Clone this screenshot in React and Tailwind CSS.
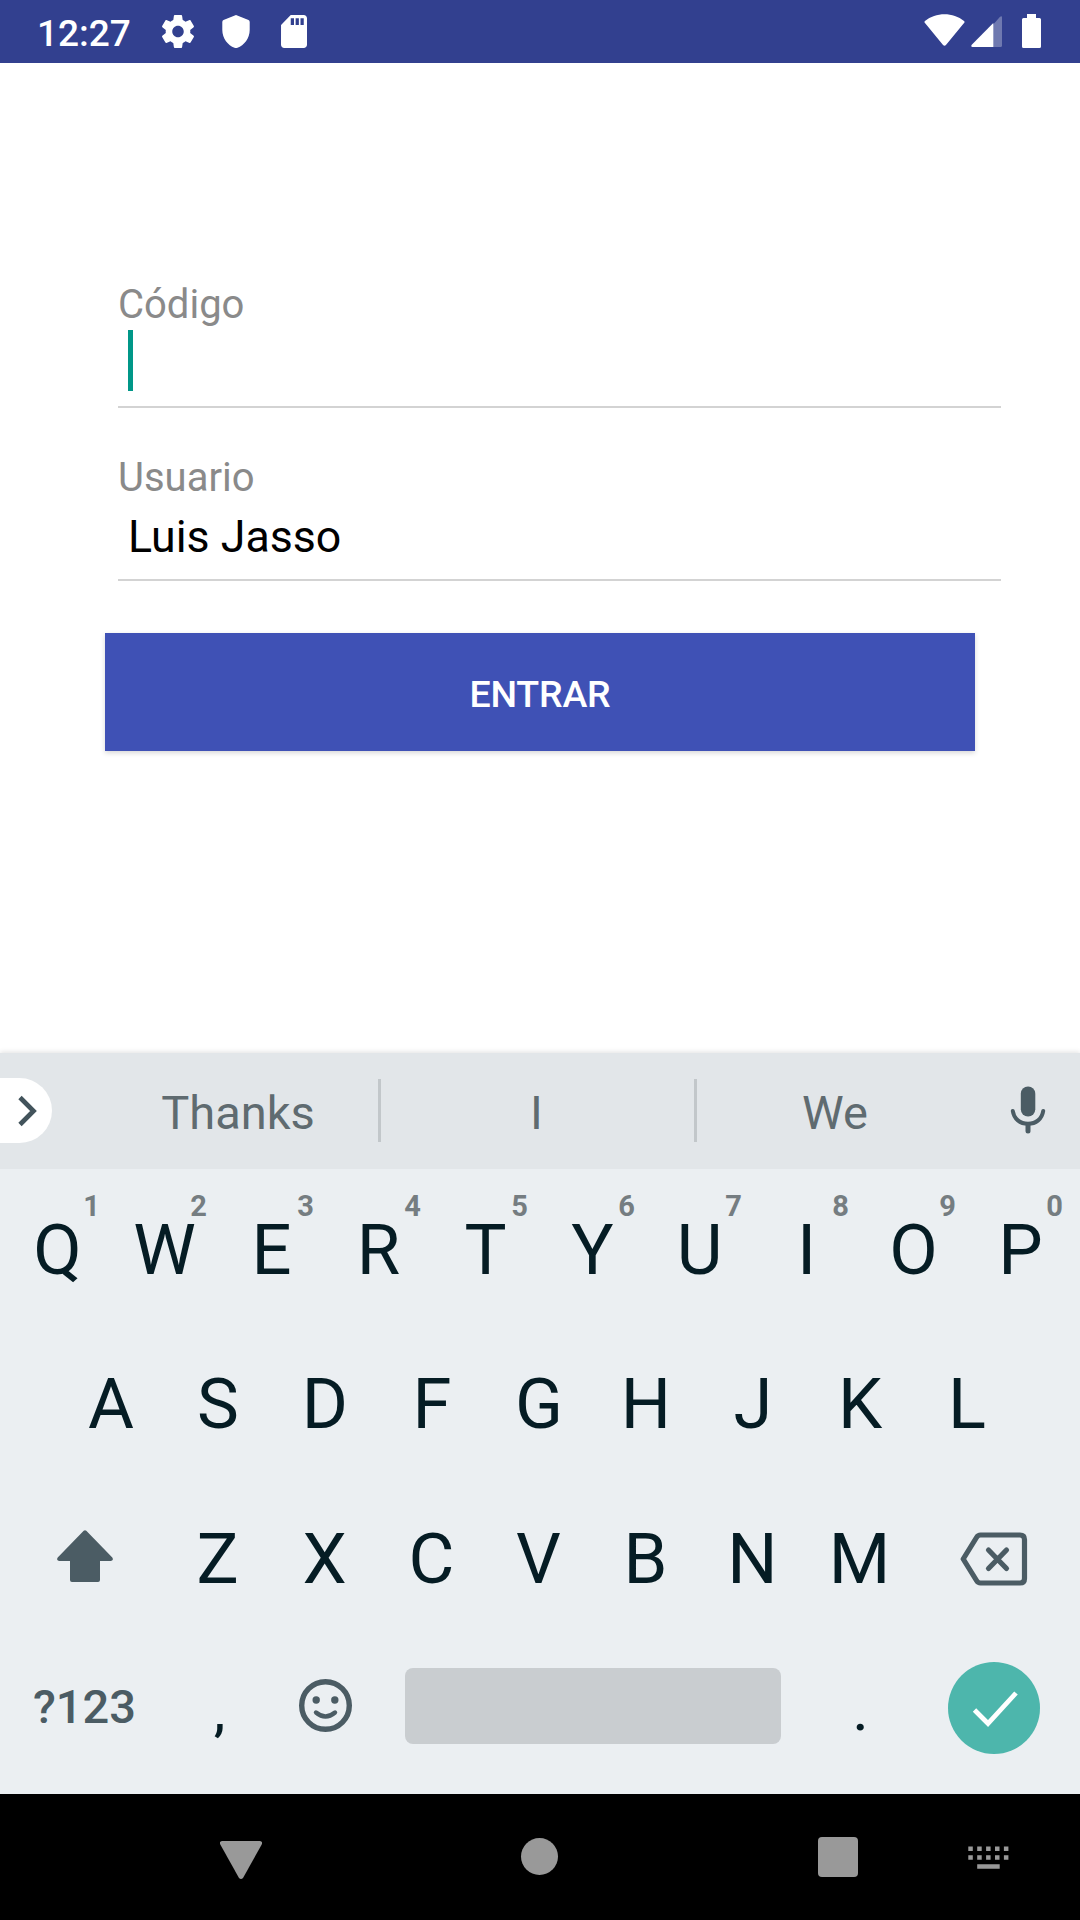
const TOP = [["Q", "1"], ["W", "2"], ["E", "3"], ["R", "4"], ["T", "5"], ["Y", "6"], ["U", "7"], ["I", "8"], ["O", "9"], ["P", "0"]];
const HOME = ["A", "S", "D", "F", "G", "H", "J", "K", "L"];
const BOTTOM = ["Z", "X", "C", "V", "B", "N", "M"];

function StatusBar() {
  return (
    <header className="flex h-[63px] items-start bg-[#32408f] text-white">
      <span className="ml-[37px] w-[125px] text-[37px] leading-[67px] font-medium">12:27</span>
      <svg className="mt-[15px] h-[33px] w-[32px]" viewBox="2.25 2 19.5 20" preserveAspectRatio="none" fill="currentColor">
        <path d="M19.43 12.98c.04-.32.07-.64.07-.98s-.03-.66-.07-.98l2.11-1.65c.19-.15.24-.42.12-.64l-2-3.46c-.12-.22-.39-.3-.61-.22l-2.49 1c-.52-.4-1.08-.73-1.69-.98l-.38-2.65C14.46 2.18 14.25 2 14 2h-4c-.25 0-.46.18-.49.42l-.38 2.65c-.61.25-1.17.59-1.69.98l-2.49-1c-.23-.09-.49 0-.61.22l-2 3.46c-.13.22-.07.49.12.64l2.11 1.65c-.04.32-.07.65-.07.98s.03.66.07.98l-2.11 1.65c-.19.15-.24.42-.12.64l2 3.46c.12.22.39.3.61.22l2.49-1c.52.4 1.08.73 1.69.98l.38 2.65c.03.24.24.42.49.42h4c.25 0 .46-.18.49-.42l.38-2.65c.61-.25 1.17-.59 1.69-.98l2.49 1c.23.09.49 0 .61-.22l2-3.46c.12-.22.07-.49-.12-.64l-2.11-1.65zM12 15.5c-1.93 0-3.5-1.57-3.5-3.5s1.57-3.5 3.5-3.5 3.5 1.57 3.5 3.5-1.57 3.5-3.5 3.5z" />
      </svg>
      <svg className="mt-[15px] ml-[28px] h-[33px] w-[28px]" viewBox="0 0 28 33" fill="currentColor">
        <path d="M14 0 26.5 5q1.200.5 1.200 2V15C27.700 23.500 22 30.500 15.500 32.700Q14 33.300 12.500 32.700C6 30.500.3 23.500.3 15V7Q.3 5.500 1.500 5Z" />
      </svg>
      <svg className="mt-[15px] ml-[31px] h-[33px] w-[26px]" viewBox="4 2 16 20" preserveAspectRatio="none" fill="currentColor">
        <path d="M18 2h-8L4.020 8 4 20c0 1.100.9 2 2 2h12c1.100 0 2-.9 2-2V4c0-1.100-.9-2-2-2zm-6 6h-2V4h2v4zm3 0h-2V4h2v4zm3 0h-2V4h2v4z" />
      </svg>
      <svg className="mt-[14px] ml-auto h-[32px] w-[41px]" viewBox="0 0 42 32" preserveAspectRatio="none" fill="currentColor">
        <path d="M.8 8.800Q0 7.800 1 7C12-2 30-2 41 7Q42 7.800 41.200 8.800L22.500 31Q21 32.500 19.500 31Z" />
      </svg>
      <svg className="mt-[16px] ml-[6px] h-[31px] w-[31px]" viewBox="0 0 32 31" preserveAspectRatio="none" fill="currentColor">
        <path d="M22 9.500 30 .8Q32-.8 32 1.500V29.500Q32 31 30.500 31H22Z" opacity=".3" />
        <path d="M23 7V31H1.500Q-.5 30.500.8 28.800Z" />
      </svg>
      <svg className="mt-[14px] mr-[39px] ml-[20px] h-[34px] w-[19px]" viewBox="0 0 19 34" fill="currentColor">
        <path d="M5 0h9v4h3.500q1.500 0 1.500 1.500v27q0 1.500-1.500 1.500h-16q-1.500 0-1.500-1.500v-27q0-1.500 1.500-1.500H5z" />
      </svg>
    </header>
  );
}

function LoginForm() {
  return (
    <main className="h-[990px] bg-white pt-[218px]">
      <div className="ml-[118px] w-[883px]">
        <label className="block h-[48px] text-[40px] leading-[48px] text-[#8a8a8a]">Código</label>
        <div className="h-[79px] border-b-2 border-[#d3d3d3] pt-[1px] pl-[10px]">
          <div className="h-[61px] w-[5px] bg-[#009788]" />
        </div>
        <label className="mt-[46px] block h-[48px] text-[40px] leading-[48px] text-[#8a8a8a]">Usuario</label>
        <div className="h-[79px] border-b-2 border-[#d3d3d3] pt-[8px] pl-[10px] text-[44.7px] leading-[54px] text-black">Luis Jasso</div>
      </div>
      <button className="mt-[52px] ml-[105px] block h-[118px] w-[870px] bg-[#3f51b5] pt-[5px] text-[37.5px] font-medium text-white shadow-[0_2px_5px_rgba(0,0,0,0.16)]"><span className="tracking-[-0.2px]">ENTRAR</span></button>
    </main>
  );
}

function Suggestions() {
  return (
    <div className="flex h-[116px] items-center bg-[#e2e6e9] text-[47px] text-[#5f6b70] shadow-[0_-1px_5px_rgba(0,0,0,0.12)]">
      <div className="mb-[1px] flex h-[65px] w-[52px] items-center rounded-r-full bg-white pl-[17px]">
        <svg className="h-[32px] w-[22px]" viewBox="0 0 22 32" fill="none" stroke="#42535b" strokeWidth="4.700">
          <path d="M3 2.500 16.500 16 3 29.500" />
        </svg>
      </div>
      <span className="ml-[46px] w-[280px] pt-[5px] text-center">Thanks</span>
      <i className="mb-[2px] h-[63px] w-[3px] bg-[#c2c7ca]" />
      <span className="w-[311px] pt-[5px] text-center">I</span>
      <i className="mb-[2px] ml-[2px] h-[63px] w-[3px] bg-[#c2c7ca]" />
      <span className="w-[276px] pt-[5px] text-center">We</span>
      <svg className="mb-[2px] ml-[37px] h-[50px] w-[36px]" viewBox="0 0 36 50" fill="none" stroke="#4b5c64" strokeLinecap="round">
        <rect x="10.800" y="1.500" width="14.500" height="30" rx="7.200" fill="#4b5c64" stroke="none" />
        <path d="M2.800 26C4 34 10 38.800 18 38.800S32 34 33.200 26" strokeWidth="4" />
        <path d="M18 40V46" strokeWidth="5" />
      </svg>
    </div>
  );
}

function Key({ children, hint }) {
  return (
    <button className="relative h-[155px] w-[107px] pr-[2px] text-[70.5px] leading-[155px] text-[#051c24]">
      {children}
      {hint && <sup className="absolute top-[19px] left-[66px] w-[41px] text-center text-[29px] leading-[29px] font-bold text-[#757d81]">{hint}</sup>}
    </button>
  );
}

function Keyboard() {
  return (
    <section className="relative h-[625px] bg-[#ebeff2] pt-[4px] text-[#051c24]">
      <div className="flex justify-center">{TOP.map(([k, n]) => <Key key={k} hint={n}>{k}</Key>)}</div>
      <div className="-mt-[1px] flex justify-center">{HOME.map((k) => <Key key={k}>{k}</Key>)}</div>
      <div className="flex items-center">
        <svg className="mx-[57px] mb-[7px] h-[52px] w-[56px]" viewBox="0 0 56 52" fill="#4b5c64">
          <path d="M26.700.8Q28-.5 29.300.8L55.300 27.500Q57 30.500 54 31H43V50Q43 52 41 52H15Q13 52 13 50V31H2Q-1 30.500.7 27.500Z" />
        </svg>
        <div className="-ml-[5px] flex">{BOTTOM.map((k) => <Key key={k}>{k}</Key>)}</div>
        <svg className="mb-[2px] ml-[46px] h-[54px] w-[68px]" viewBox="0 0 68 54" fill="none" stroke="#4b5c64" strokeWidth="5.200" strokeLinejoin="round" strokeLinecap="round">
          <path d="M20.500 3H60Q64.500 3 64.500 7.500V46.500Q64.500 51 60 51H20.500Q18 51 16.500 48.500L3.200 27 16.500 5.500Q18 3 20.500 3Z" />
          <path d="M28.500 18 46.500 36.500M46.500 18 28.500 36.500" />
        </svg>
      </div>
      <div className="-mt-[1px] flex h-[140px] items-center">
        <span className="ml-[33px] w-[132px] pt-[2px] text-[47px] leading-[140px] font-medium text-[#4b5c64]">?123</span>
        <span className="w-[109px] pt-[13px] text-center text-[52px] font-medium">,</span>
        <svg className="ml-[25px] h-[54px] w-[54px]" viewBox="0 0 54 54" fill="none" stroke="#4b5c64" strokeLinecap="round">
          <circle cx="26.500" cy="26.500" r="23.800" strokeWidth="5.400" />
          <circle cx="17.200" cy="21" r="3.700" fill="#4b5c64" stroke="none" />
          <circle cx="35.800" cy="21" r="3.700" fill="#4b5c64" stroke="none" />
          <path d="M17 33.500Q26.500 41.500 36 33.500" strokeWidth="4.400" />
        </svg>
        <button className="ml-[52px] h-[76px] w-[376px] rounded-lg bg-[#c9cdd0]" />
        <span className="ml-[26px] w-[107px] pt-[13px] text-center text-[52px] font-medium">.</span>
        <button className="mt-[4px] ml-[34px] flex size-[92px] items-center justify-center rounded-full bg-[#4db6ac] pl-[2px]">
          <svg className="size-[48px]" viewBox="0 0 48 48" fill="none" stroke="white" strokeWidth="4.800">
            <path d="M3.500 26 17 39.500 45 9" />
          </svg>
        </button>
      </div>
    </section>
  );
}

function NavigationBar() {
  return (
    <nav className="flex h-[126px] items-start bg-black text-[#999999]">
      <svg className="mt-[47px] ml-[220px] h-[38px] w-[42px]" viewBox="0 0 42 38" fill="currentColor">
        <path d="M2 0H40Q43 .5 41.700 3.500L23 37Q21 39 19 37L.3 3.500Q-1 .5 2 0Z" />
      </svg>
      <i className="mt-[44px] ml-[259px] size-[37px] rounded-full bg-[#999999]" />
      <i className="mt-[43px] ml-[260px] size-[40px] rounded-sm bg-[#999999]" />
      <svg className="mt-[52px] ml-[110px] h-[24px] w-[42px]" viewBox="0 0 42 24" fill="currentColor">
        <path d="M.3.500h4.500v4.500h-4.500zM9.200.5h4.500v4.500h-4.500zM18.100.5h4.500v4.500h-4.500zM27 .5h4.500v4.500h-4.500zM35.900.5h4.500v4.500h-4.500zM.3 9.200h4.500v4.500h-4.500zM9.200 9.200h4.500v4.500h-4.500zM18.100 9.200h4.500v4.500h-4.500zM27 9.200h4.500v4.500h-4.500zM35.900 9.200h4.500v4.500h-4.500zM9.200 18.200h22.500v4.500H9.200z" />
      </svg>
    </nav>
  );
}

export default function App() {
  return (
    <div className="h-[1920px] w-[1080px] overflow-hidden bg-white font-['Roboto',sans-serif]">
      <StatusBar />
      <LoginForm />
      <Suggestions />
      <Keyboard />
      <NavigationBar />
    </div>
  );
}
